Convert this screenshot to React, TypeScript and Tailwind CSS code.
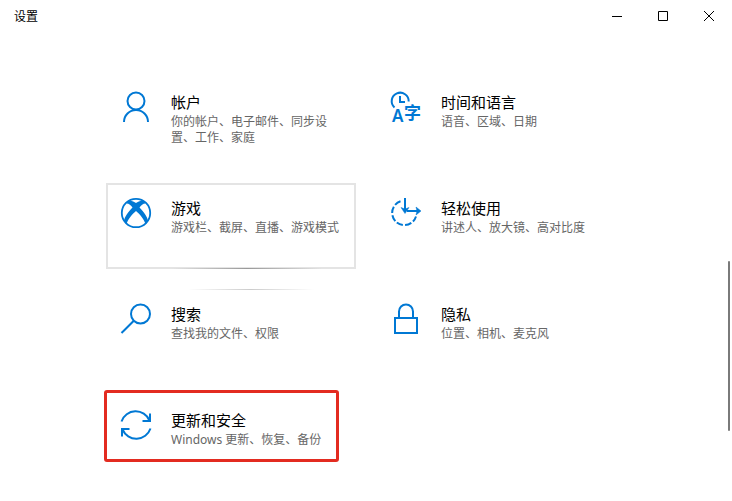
import type { ReactNode } from "react";

interface Category {
  id: string;
  title: string;
  description: string;
  icon: ReactNode;
  state?: "hovered" | "marked";
}

function Icon({ children }: { children: ReactNode }) {
  return (
    <svg
      viewBox="0 0 32 32"
      className="size-8 shrink-0 overflow-visible"
      fill="none"
      stroke="#0078d4"
      strokeWidth="2"
      aria-hidden="true"
    >
      {children}
    </svg>
  );
}

const CATEGORIES: Category[] = [
  {
    id: "accounts",
    title: "帐户",
    description: "你的帐户、电子邮件、同步设置、工作、家庭",
    icon: (
      <Icon>
        <circle cx="16" cy="10" r="8.5" />
        <path d="M4 31a12 12 0 0 1 24 0" />
      </Icon>
    ),
  },
  {
    id: "time",
    title: "时间和语言",
    description: "语音、区域、日期",
    icon: (
      <Icon>
        <path d="M4.5 16.5A8.5 8.5 0 1 1 18.7 10.5" />
        <path d="M10 5v6h5" />
        <g fill="#0078d4" stroke="none">
          <text x="2" y="31" className="font-['Noto_Sans',sans-serif] text-[17px] font-semibold">
            A
          </text>
          <text x="14" y="28" className="text-[17px] font-bold">
            字
          </text>
        </g>
      </Icon>
    ),
  },
  {
    id: "gaming",
    title: "游戏",
    description: "游戏栏、截屏、直播、游戏模式",
    state: "hovered",
    icon: (
      <Icon>
        <circle cx="16" cy="16" r="14.2" strokeWidth="1.8" />
        <path
          d="M8 4C11 3.2 14 4.5 16 6C18 4.5 21 3.2 24 4L25.5 6.5C23 6.5 21 8.5 19.500 10.5C24 15 27.5 20 28 24L25.5 27C24 22 19.5 17 16 14C12.5 17 8 22 6.5 27L4 24C4.5 20 8 15 12.5 10.5C11 8.5 9 6.5 6.5 6.5Z"
          fill="#0078d4"
          stroke="none"
        />
      </Icon>
    ),
  },
  {
    id: "ease",
    title: "轻松使用",
    description: "讲述人、放大镜、高对比度",
    icon: (
      <Icon>
        <path d="M10.5 4.3A12.2 12.2 0 1 0 26 19.5" strokeDasharray="6.5 2.2" />
        <path d="M15 1v12M17 14h11" />
        <path d="M11 10.5l4 1.5 4-1.5-4 6zM26 10l5 4-5 4 1-4z" fill="#0078d4" strokeWidth="0.5" />
      </Icon>
    ),
  },
  {
    id: "search",
    title: "搜索",
    description: "查找我的文件、权限",
    icon: (
      <Icon>
        <circle cx="20.5" cy="11" r="9.5" />
        <path d="M13.8 17.7 1.5 30" />
      </Icon>
    ),
  },
  {
    id: "privacy",
    title: "隐私",
    description: "位置、相机、麦克风",
    icon: (
      <Icon>
        <path d="M5 15h22v15H5zM9 15V8.500a7 7 0 0 1 14 0V15" />
      </Icon>
    ),
  },
  {
    id: "update",
    title: "更新和安全",
    description: "Windows 更新、恢复、备份",
    state: "marked",
    icon: (
      <Icon>
        <path d="M1.5 12.5A15 15 0 0 1 29.5 11.5M30 4.5v7.5h-7.5M30.5 19.5A15 15 0 0 1 2.5 20.5M2 27.5V20h7.5" />
      </Icon>
    ),
  },
];

function TitleBar() {
  const buttonClass =
    "flex h-8 w-[46px] items-center justify-center hover:bg-black/10";

  return (
    <header className="flex h-8 shrink-0 items-center">
      <h1 className="flex-1 pt-px pl-[14px] text-[12px] leading-4">设置</h1>
      <button type="button" aria-label="最小化" className={buttonClass}>
        <svg viewBox="0 0 10 10" className="size-[10px]" stroke="currentColor" fill="none">
          <path d="M0 5.5h10" />
        </svg>
      </button>
      <button type="button" aria-label="最大化" className={buttonClass}>
        <svg viewBox="0 0 10 10" className="size-[10px]" stroke="currentColor" fill="none">
          <path d="M.5.5h9v9h-9z" />
        </svg>
      </button>
      <button type="button" aria-label="关闭" className={buttonClass}>
        <svg viewBox="0 0 10 10" className="size-[10px]" stroke="currentColor" fill="none">
          <path d="M0 0l10 10M10 0 0 10" />
        </svg>
      </button>
    </header>
  );
}

function CategoryTile({ category }: { category: Category }) {
  const { title, description, icon, state } = category;

  return (
    <a
      href={`#${category.id}`}
      className={
        state === "hovered"
          ? "relative flex min-h-[86px] gap-[19px] border-2 border-[#e4e4e4] pt-3 pr-2 pl-3"
          : "relative flex min-h-[86px] gap-[19px] border-2 border-transparent pt-3 pr-2 pl-3"
      }
    >
      {icon}
      <div className="min-w-0 flex-1">
        <h2 className="text-[15px] leading-[22px] text-black">{title}</h2>
        <p className="pt-px text-[12px] leading-4 text-[#666]">{description}</p>
      </div>

      {/* Reveal light under the pointer, spilling onto the tile below */}
      {state === "hovered" && (
        <>
          <span className="absolute right-8 -bottom-[2px] left-16 h-px bg-linear-to-r from-transparent via-[#999] to-transparent" />
          <span className="absolute right-10 -bottom-[23px] left-20 h-px bg-linear-to-r from-transparent via-[#ccc] to-transparent" />
        </>
      )}
      {state === "marked" && (
        <span className="absolute -top-[7px] -left-1 h-[72px] w-[235px] rounded-[3px] border-3 border-[#e32b20]" />
      )}
    </a>
  );
}

export default function App() {
  return (
    <div className="flex min-h-screen flex-col bg-white font-['Noto_Sans','Noto_Sans_CJK_SC',sans-serif] text-black">
      <TitleBar />
      <div className="flex flex-1">
        <main className="grid flex-1 grid-cols-[repeat(auto-fill,250px)] content-start gap-5 pt-[45px] pb-5 pl-[106px]">
          {CATEGORIES.map((category) => (
            <CategoryTile key={category.id} category={category} />
          ))}
        </main>
        {/* Collapsed scrollbar */}
        <div className="flex w-1 flex-col pt-[229px]" aria-hidden="true">
          <div className="h-[170px] w-[2px] rounded-full bg-[#7a7a7a]" />
        </div>
      </div>
    </div>
  );
}
